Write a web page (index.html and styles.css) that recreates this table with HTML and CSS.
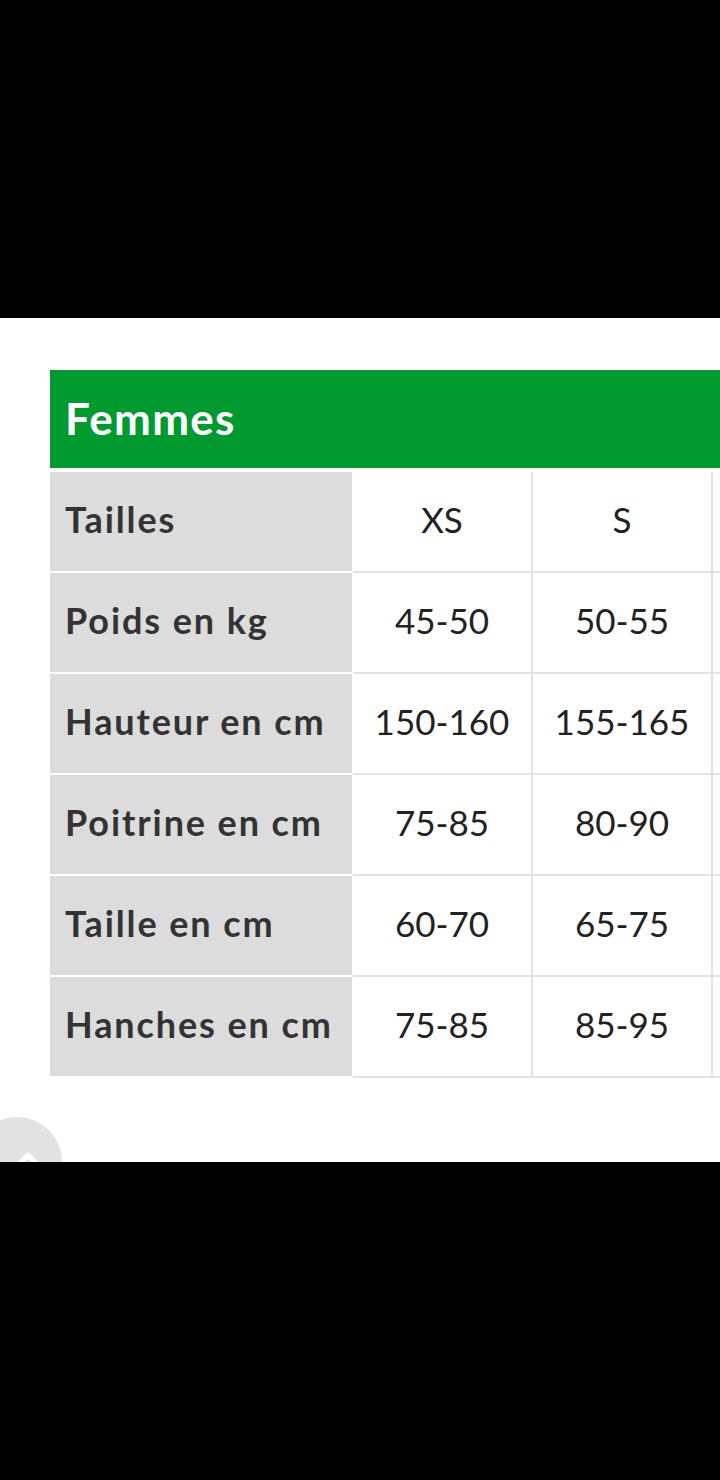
FILE: index.html
```html
<!DOCTYPE html>
<html lang="fr">
<head>
<meta charset="utf-8">
<title>Femmes - Tailles</title>
<link rel="stylesheet" href="styles.css">
</head>
<body>
<div class="bar"></div>
<main class="page">
  <div class="chart">
    <div class="chart-title">Femmes</div>
    <table class="sizes">
      <tbody>
        <tr><th>Tailles</th><td>XS</td><td>S</td><td class="next"></td></tr>
        <tr><th>Poids en kg</th><td>45-50</td><td>50-55</td><td class="next"></td></tr>
        <tr><th>Hauteur en cm</th><td>150-160</td><td>155-165</td><td class="next"></td></tr>
        <tr><th>Poitrine en cm</th><td>75-85</td><td>80-90</td><td class="next"></td></tr>
        <tr><th>Taille en cm</th><td>60-70</td><td>65-75</td><td class="next"></td></tr>
        <tr><th>Hanches en cm</th><td>75-85</td><td>85-95</td><td class="next"></td></tr>
      </tbody>
    </table>
  </div>
  <div class="to-top" aria-label="Haut de page">
    <svg class="to-top-icon" viewBox="0 0 24 24" width="40" height="40"><path d="M5 15l7-7 7 7" fill="none" stroke="#fff" stroke-width="3.2" stroke-linecap="round" stroke-linejoin="round"/></svg>
  </div>
</main>
<div class="bar bar-bottom"></div>
</body>
</html>
```
FILE: styles.css
```css
html, body {
  margin: 0;
  padding: 0;
  background: #000;
}
body {
  width: 720px;
  height: 1480px;
  overflow: hidden;
  font-family: Lato, "Liberation Sans", sans-serif;
}
.bar {
  height: 318px;
  background: #000;
}
.page {
  position: relative;
  height: 844px;
  background: #fff;
  overflow: hidden;
  padding-top: 52px;
  box-sizing: border-box;
}
.chart {
  margin-left: 50px;
  width: 900px;
}
.chart-title {
  height: 98px;
  background: #009a2f;
  color: #fff;
  font-weight: 700;
  font-size: 44px;
  letter-spacing: 1.3px;
  line-height: 96px;
  padding-left: 15px;
  margin-bottom: 4px;
}
.sizes {
  border-collapse: separate;
  border-spacing: 0;
}
.sizes th {
  width: 287px;
  height: 94px;
  padding: 0 0 5px 15px;
  background: #dcdcdc;
  color: #333;
  font-weight: 700;
  font-size: 36px;
  letter-spacing: 1.9px;
  text-align: left;
  border-bottom: 2px solid #fff;
  border-right: 1px solid #fff;
  white-space: nowrap;
}
.sizes td {
  width: 178px;
  height: 94px;
  padding: 0 0 5px 0;
  text-align: center;
  color: #222;
  font-size: 35px;
  font-weight: 400;
  border-bottom: 2px solid #e2e2e2;
  border-right: 2px solid #e2e2e2;
  white-space: nowrap;
}
.to-top {
  position: absolute;
  left: -28px;
  top: 799px;
  width: 90px;
  height: 90px;
  border-radius: 50%;
  background: #e2e2e2;
  display: flex;
  align-items: center;
  justify-content: center;
}
.to-top-icon {
  margin-left: 22px;
}
```
